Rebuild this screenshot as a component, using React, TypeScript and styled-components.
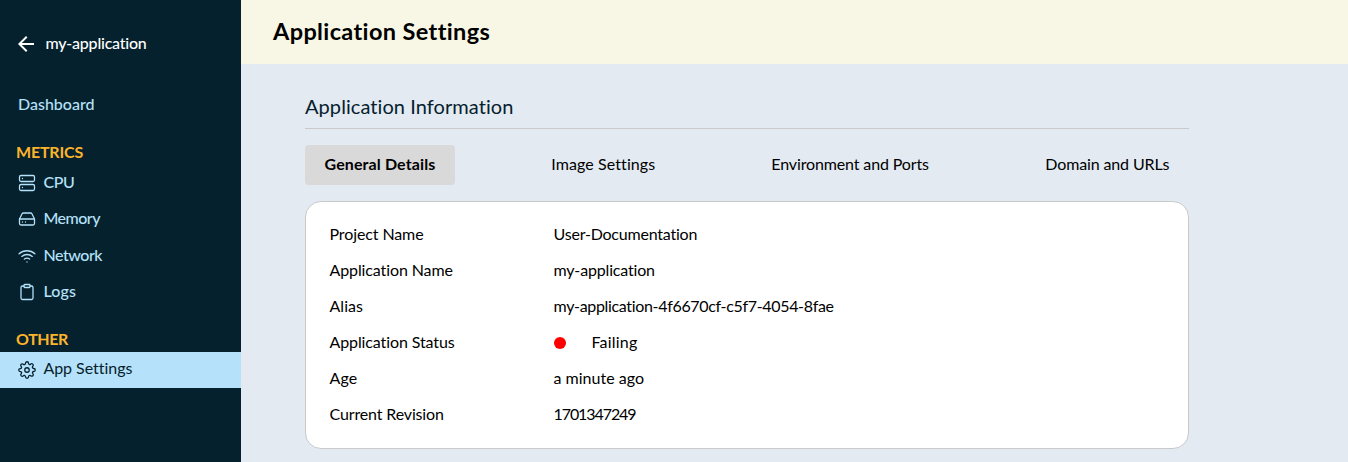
import React from 'react';
import styled, { createGlobalStyle } from 'styled-components';
import { FiServer, FiHardDrive, FiWifi, FiClipboard, FiSettings } from 'react-icons/fi';
import { MdArrowBack } from 'react-icons/md';

const GlobalStyle = createGlobalStyle`
  * { box-sizing: border-box; }
  body {
    margin: 0;
    font-family: Lato, "Liberation Sans", sans-serif;
    font-size: 16px;
    line-height: 20px;
    font-variant-ligatures: none;
    color: #000;
  }
`;

const Page = styled.div`
  display: flex;
  height: 462px;
  overflow: hidden;
`;

const Sidebar = styled.nav`
  flex: 0 0 241px;
  background: #05212d;
  color: #b5e2fa;
`;

const Label = styled.span<{ $tracking?: number }>`
  padding-bottom: 2px;
  white-space: nowrap;
  letter-spacing: ${(p) => p.$tracking ?? 0}px;
`;

const BackLink = styled.div`
  display: flex;
  align-items: center;
  gap: 8px;
  height: 56px;
  padding: 32px 0 0 13.5px;
  color: #fff;
  font-weight: 500;
  svg { flex: none; }
`;

const DashboardLink = styled.div`
  padding: 38px 0 0 18px;
  font-weight: 500;
`;

const SectionTitle = styled.div<{ $top: number }>`
  padding: ${(p) => p.$top}px 0 0 16px;
  color: #fcb42a;
  font-weight: 700;
`;

const NavItem = styled.div<{ $active?: boolean }>`
  display: flex;
  align-items: center;
  gap: 7.8px;
  height: ${(p) => (p.$active ? 36 : 36.4)}px;
  padding-left: 17.6px;
  font-weight: ${(p) => (p.$active ? 400 : 500)};
  background: ${(p) => (p.$active ? '#b5e2fa' : 'transparent')};
  color: ${(p) => (p.$active ? '#05212d' : '#b5e2fa')};
  svg { flex: none; }
  span { padding-bottom: ${(p) => (p.$active ? 3 : 2)}px; }
`;

const NavGroup = styled.div<{ $top?: number }>`
  padding-top: ${(p) => p.$top ?? 0}px;
`;

const Main = styled.main`
  flex: 1;
  background: #e3eaf2;
`;

const Header = styled.header`
  display: flex;
  align-items: center;
  height: 64px;
  padding-left: 32px;
  background: #f8f6e4;
  font-size: 23.5px;
  font-weight: 700;
`;

const Content = styled.section`
  width: 884px;
  margin-left: 64px;
`;

const Heading = styled.h2`
  margin: 0;
  height: 65px;
  padding-top: 32px;
  border-bottom: 1px solid #c9c9c9;
  color: #05212d;
  font-size: 20px;
  font-weight: 400;
`;

const Tabs = styled.div`
  display: flex;
  justify-content: space-between;
  margin: 16px 0;
`;

const Tab = styled.div<{ $width: number; $active?: boolean }>`
  display: flex;
  align-items: center;
  width: ${(p) => p.$width}px;
  height: 40px;
  padding-left: ${(p) => (p.$active ? 19.5 : 20.3)}px;
  border-radius: 4px;
  background: ${(p) => (p.$active ? '#d9d9d9' : 'transparent')};
  font-weight: ${(p) => (p.$active ? 700 : 400)};
`;

const Card = styled.div`
  height: 248px;
  padding: 15px 23.5px;
  border: 1px solid #c9c9c9;
  border-radius: 16px;
  background: #fff;
`;

const DetailRow = styled.div`
  display: grid;
  grid-template-columns: 224px 1fr;
  align-items: center;
  height: 36px;
`;

const Value = styled.div`
  display: flex;
  align-items: center;
`;

const StatusDot = styled.i`
  width: 12px;
  height: 12px;
  margin-right: 26px;
  border-radius: 50%;
  background: #f00;
`;

const metrics = [
  { label: 'CPU', tracking: -0.39, Icon: FiServer },
  { label: 'Memory', tracking: -0.5, Icon: FiHardDrive },
  { label: 'Network', tracking: -0.46, Icon: FiWifi },
  { label: 'Logs', tracking: 0.2, Icon: FiClipboard },
];

const tabs = [
  { label: 'General Details', tracking: 0.12, width: 150 },
  { label: 'Image Settings', tracking: 0.09, width: 144 },
  { label: 'Environment and Ports', tracking: -0.13, width: 198 },
  { label: 'Domain and URLs', tracking: -0.13, width: 164 },
];

const details = [
  { name: 'Project Name', nameTracking: -0.11, value: 'User-Documentation', tracking: -0.21 },
  { name: 'Application Name', nameTracking: -0.11, value: 'my-application', tracking: -0.17 },
  { name: 'Alias', nameTracking: 0.04, value: 'my-application-4f6670cf-c5f7-4054-8fae', tracking: -0.33 },
  { name: 'Application Status', nameTracking: -0.11, value: 'Failing', tracking: 0.2, failing: true },
  { name: 'Age', nameTracking: 0.17, value: 'a minute ago', tracking: 0.01 },
  { name: 'Current Revision', nameTracking: -0.14, value: '1701347249', tracking: -1.08 },
];

export default function App() {
  return (
    <Page>
      <GlobalStyle />
      <Sidebar>
        <BackLink>
          <MdArrowBack size={24} />
          <Label $tracking={-0.23}>my-application</Label>
        </BackLink>
        <DashboardLink>
          <Label>Dashboard</Label>
        </DashboardLink>
        <SectionTitle $top={28}>
          <Label $tracking={-0.19}>METRICS</Label>
        </SectionTitle>
        <NavGroup $top={2.8}>
          {metrics.map(({ label, tracking, Icon }) => (
            <NavItem key={label}>
              <Icon size={18} strokeWidth={1.7} />
              <Label $tracking={tracking}>{label}</Label>
            </NavItem>
          ))}
        </NavGroup>
        <SectionTitle $top={18.6}>
          <Label $tracking={-0.39}>OTHER</Label>
        </SectionTitle>
        <NavGroup $top={3}>
          <NavItem $active>
            <FiSettings size={18} strokeWidth={1.7} />
            <Label $tracking={-0.03}>App Settings</Label>
          </NavItem>
        </NavGroup>
      </Sidebar>
      <Main>
        <Header>
          <Label $tracking={0.37}>Application Settings</Label>
        </Header>
        <Content>
          <Heading>
            <Label $tracking={0.07}>Application Information</Label>
          </Heading>
          <Tabs>
            {tabs.map((tab, i) => (
              <Tab key={tab.label} $width={tab.width} $active={i === 0}>
                <Label $tracking={tab.tracking}>{tab.label}</Label>
              </Tab>
            ))}
          </Tabs>
          <Card>
            {details.map((row) => (
              <DetailRow key={row.name}>
                <Label $tracking={row.nameTracking}>{row.name}</Label>
                <Value>
                  {row.failing && <StatusDot />}
                  <Label $tracking={row.tracking}>{row.value}</Label>
                </Value>
              </DetailRow>
            ))}
          </Card>
        </Content>
      </Main>
    </Page>
  );
}
